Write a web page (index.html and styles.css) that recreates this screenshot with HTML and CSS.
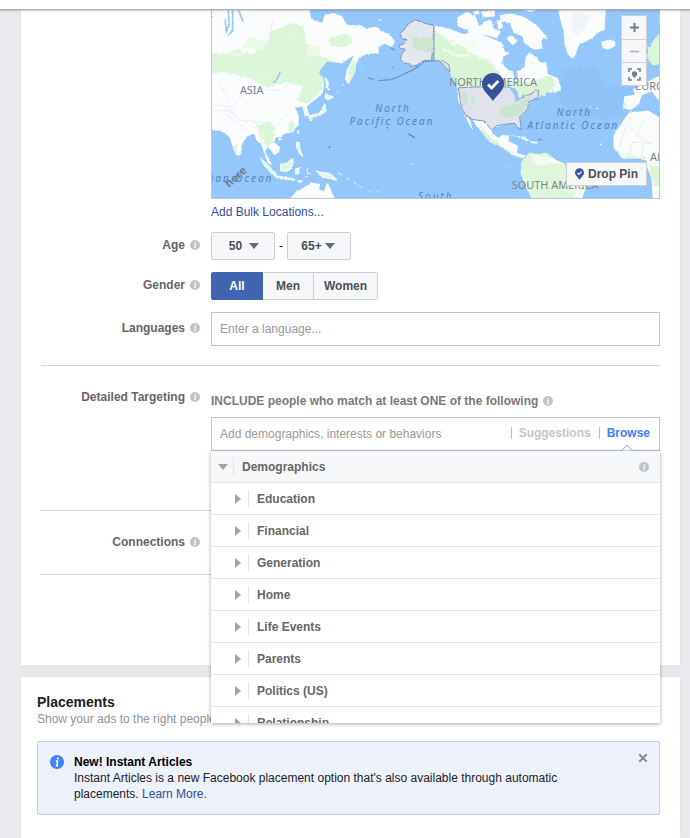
FILE: index.html
```html
<!DOCTYPE html>
<html lang="en">
<head>
<meta charset="utf-8">
<meta name="viewport" content="width=device-width, initial-scale=1">
<title>Audience</title>
<link rel="stylesheet" href="styles.css">
</head>
<body>
<svg width="0" height="0" class="defs" aria-hidden="true">
  <symbol id="info" viewBox="0 0 10 10"><circle cx="5" cy="5" r="5" fill="currentColor"/><circle cx="5.6" cy="2.5" r=".8" fill="#fff"/><path d="M4.2 4.3h1.2L4.8 7.6h1" fill="none" stroke="#fff" stroke-width="1.1"/></symbol>
  <symbol id="pin" viewBox="0 0 22 28"><path d="M11 0a11 11 0 0 1 11 11c0 6-6 10-11 17C6 21 0 17 0 11A11 11 0 0 1 11 0z" fill="#34539b"/><path d="M6 11.5l3.6 3.5 6.8-7" fill="none" stroke="#fff" stroke-width="2.8"/></symbol>
  <symbol id="down" viewBox="0 0 10 6"><path d="M0 0h10L5 6z" fill="currentColor"/></symbol>
  <symbol id="right" viewBox="0 0 6 10"><path d="M0 0l6 5-6 5z" fill="currentColor"/></symbol>
</svg>
<header class="topbar"></header>
<main>
  <section class="card audience">
    <div class="row">
      <div class="field">
        <div class="map">
          <svg class="world" viewBox="0 0 449 189" preserveAspectRatio="xMidYMid slice" role="img" aria-label="World map">
            <defs>
            <filter id="coast" x="-5%" y="-5%" width="110%" height="110%"><feTurbulence type="fractalNoise" baseFrequency=".16" numOctaves="3" seed="4"/><feDisplacementMap in="SourceGraphic" scale="7" xChannelSelector="R" yChannelSelector="G"/></filter>
            <filter id="woods" x="-5%" y="-5%" width="110%" height="110%"><feTurbulence type="fractalNoise" baseFrequency=".1" numOctaves="3" seed="9"/><feDisplacementMap in="SourceGraphic" scale="16" xChannelSelector="R" yChannelSelector="G"/><feGaussianBlur stdDeviation=".6"/></filter>
            <clipPath id="asia"><path d="M18 20H310L318 56 350 66 358 42 385 36 410 46 425 72 470 74 480 82 512 78 530 92 552 100 570 122 560 138 535 128 520 142 520 158 485 160 462 172 452 190 450 215 430 250 420 238 423 210 436 185 445 164 410 188 365 182 345 205 342 220 352 228 356 250 352 275 335 293 318 305 304 318 312 345 298 348 290 318 268 322 280 345 278 375 262 395 235 400 226 412 212 410 205 425 222 440 222 455 205 464 192 446 182 440 180 460 195 484 199 498 185 485 172 450 166 430 152 420 145 400 125 408 108 432 104 465 92 466 80 440 72 412 60 400 40 390 18 388Z"/></clipPath>
            <clipPath id="america"><path d="M12 73L60 84 100 100 130 92 180 110 216 125 225 150 240 158 220 168 218 190 236 208 250 212 255 240 265 232 262 212 285 198 288 170 300 155 322 170 330 184 350 185 355 220 385 232 395 262 385 276 350 275 325 292 300 300 297 320 270 350 273 385 263 388 255 365 200 380 185 370 187 398 205 412 218 404 240 406 236 422 265 436 262 458 290 466 280 475 250 465 205 435 180 425 160 400 135 370 125 352 115 348 130 388 122 380 100 335 85 300 80 255 60 215 38 184 12 175Z"/></clipPath>
            <clipPath id="samerica"><path d="M275 485L300 456 325 462 350 457 380 480 405 488 412 505 440 510 475 545 458 595H305L285 550 272 520Z"/></clipPath></defs>
            <rect width="449" height="189" fill="#94c8fc"/>
            <path d="M230 70l35 25 15 45-20 30h-40l12-60z" fill="#8cc1fa" opacity=".2"/>
            <path d="M352 60l30-5 18 25 30-5-12 30-40 5-30-20z" fill="#84bcf7" opacity=".35" filter="url(#woods)"/>
            <g transform="translate(-6 -9) scale(.33333)">
              <g filter="url(#coast)"><g clip-path="url(#asia)">
                <path d="M0 0h700v600H0z" fill="#fafcfd"/>
                <path filter="url(#woods)" d="M18 160l45-2 30-12 48 15 50-45 0-20 70-30 35 10 5 45 30 40 60 20-25 30-20 60-40 40-30-10 15-45-50-10-60 15-40-25-60-15-66-10z M370 110l50-10 25 15-20 25-50-5z M425 205l20-30 12 20-24 60z M150 375l40-15 20 25-5 35-20 25-25-45z M255 360l15 15-10 25-15-10z M80 440l12-10 5 30z" fill="#dcf6d8"/>
                <path filter="url(#woods)" d="M130 110l60 10-20 30-60-10zM310 130l40 10-20 30-30-10zM60 160l60-5-30 15z" fill="#eaf9e8"/>
                <path d="M20 220l60-15 70 30 50-15M20 310l50 10 30 40 70 5M80 320l50-60 80 10 55-20M40 250l40 70M60 340l65 50M215 370l30-30M200 60l-15 100M250 65l30 90 50 25M20 330h50l20 20M140 360l30 30-10 30" fill="none" stroke="#ececf7" stroke-width="3"/>
                <path d="M66 20l4 50-8 20-5-35M80 20v70l-15 15M98 28l14 35M224 215l-12 24-12 8" fill="none" stroke="#94c8fc" stroke-width="5"/>
              </g></g>
              <g fill="#e1f7de" stroke="#f8fcfb" stroke-width="3" filter="url(#coast)">
                <path d="M360 280l24 10-17 8-8-4zM358 310l4 22-18 12-30 8-4-5 32-9 10-16zM359 230l8 10 3 28-6-5zM310 350l10 8-3 4zM165 474l25 24 22 24-8 3-28-28zM205 526l60 10 3 5-55-8zM224 492l18-3 18-14 3 12-8 20-12 7-18-2zM270 506l14-4-8 8 6 10-12 2zM332 512l16 5 24 2 24 20-18-2-30-8zM273 424l8 4 2 18 8 22-8-7-10-20zM275 542h16l-10 6zM219 414l8 2-6 4zM277 390l3 6-3 4z"/>
                <path d="M250 600l22-24 22-12 22-15 26 4-3 15 18 8 8-28 9 18 6 18 12 18z" fill="#f8fcfb"/>
              </g>
              <path d="M398 518l12 6M424 535l8 4M445 545l8 8M460 555l8 8M492 575h4M517 575h4M617 492h5M305 502v16M305 520h10M300 530h6M410 252h5M395 275h4M520 57h10M468 205h3" stroke="#f4fbfb" stroke-width="3"/>
              <path filter="url(#coast)" d="M687 75l-27-8-28-10-22 12-14 20-12 9 7 16 15 3-10 12-14 5 4 8 16 4-12 13-4 18 12 10 20 4-4 8 20-6 20-12 26-2z" fill="#e3e7ee" stroke="#8796c1" stroke-width="3"/>
              <path filter="url(#woods)" d="M615 108l30 4 41-2v44l-40 0-20-14z" fill="#cde7cf"/>
              <g filter="url(#coast)"><path d="M690 180l-32 2-28 22-30 15-42 18-38 3M505 237l-16-6M557 142l12 6M562 198v3" fill="none" stroke="#7791ca" stroke-width="4"/></g>
              <path d="M610 400l8 6M620 405l8 8M546 380v4M372 438v5" stroke="#5877ae" stroke-width="4"/>
            </g>
            <g transform="translate(219 -9) scale(.33333)">
              <g filter="url(#coast)"><g clip-path="url(#america)">
                <path d="M0 0h500v600H0z" fill="#fafcfc"/>
                <path filter="url(#woods)" d="M10 90l55 25 65 45 50 20 30 40 20 20 80 5 55-25 20 45-30 15-80 25-100-30-120-8-30-60-25-32z" fill="#d9f5d6"/>
                <path filter="url(#woods)" d="M150 380l20 15 30 32 50 30-20 0-75-50z" fill="#d9f4d5"/>
                <path filter="url(#woods)" d="M20 85l50 45 55-10 20 50 50 10M40 145l40 20 60-4M300 180l30 20" fill="none" stroke="#f3faf3" stroke-width="7"/>
              </g></g>
              <path filter="url(#coast)" d="M85 262l55-3h95l24 10 8 28 20-12 16-3 16-15 8 3-2 22-28 12-2 20-25 24 5 40-12-5-8-15-55 8-14 14-22-28-38-5-20-15-12-25z" fill="#e0e3ec" stroke="#8796bd" stroke-width="3"/>
              <path filter="url(#woods)" d="M210 320l55-10 40-25-30 57-35 10-30-5zM95 275l20 5-5 35-13-5zM120 290l20-10-8 35z" fill="#cbe5cf"/>
              <path filter="url(#coast)" d="M240 262l18 5 9 28-6 8-7-24zM278 283l12 2" fill="#94c8fc" stroke="#94c8fc" stroke-width="4"/>
              <path d="M12 73v102M0 178l30 3 15 18 15 15-3-22-22-14" fill="#dbe2e9" stroke="#8796bd" stroke-width="3"/>
              <g fill="#fafcfc" filter="url(#coast)">
                <path d="M82 50l30-18 25 15 10 26-40 14-25-12zM128 32l18-4 4 10-14 4zM152 32l43-4 0 18-33 4zM110 75l40 0 20 12-4 16-50-6zM160 64l24-8 8 28 22 8-12 20-32-8-20-22zM212 42l33-4 40 10 40 28 25 30-14 13 3 24-23 4-30-18-8-23-26-10-10-28-30-8zM200 60l14-3 6 22-14 8zM228 110l18-6 18 16-15 14zM250 20h80l-25 14zM348 98l6 12-8 10z"/>
                <path d="M385 20l6 30 12 45 2 35 10 30 14 16 10-15 10-28 38-20 23-20 16-5 4-70z"/>
                <path d="M515 124l22-7 20 4 2 14-23 12-16-6z"/>
                <path d="M700 355l-43-25-30 4-27 2-25 35-22 35 0 36 28 33 53 0 17 5 4 24 13 30 3 70h29z"/>
                <path d="M700 222l-48 22-40 23 5 16-32 5-3 36 23 6 25-20 8-25 30-13 32 45zM605 202l20 12 8 34-22 2 4-20-10-13zM582 222l14 4-5 16-10 3z"/>
                <path d="M238 404l40 5 22 11-6 2-30-12zM304 423l20 2-2 5-20-2zM478 320h6M510 430h7v5h-7z"/>
              </g>
              <path filter="url(#woods)" d="M435 35l50 10-20 40-30 20-15-40z" fill="#f2f5f7"/>
              <path filter="url(#woods)" d="M697 85l-27 40-14 18 3 42 14 10 24-9zM570 455l20 13h55l10 5h-65zM658 490l39 10v60l-24-5zM585 296l8 2-3 23-7 3z" fill="#daf5d7"/>
              <g filter="url(#coast)"><g clip-path="url(#samerica)">
                <path d="M260 440h230v160H260z" fill="#dff6dc"/>
                <path filter="url(#woods)" d="M300 460l80 16 25 15-50-2-30 10-15-20zM430 515l50 40-10 50h-30l-10-45zM280 510l15 50-10 10z" fill="#f6fbf6"/>
              </g></g>
              <path d="M555 395l35-30 35 40 20-45M570 440l20-60M625 405l50 30M600 470l10-45 60 5M640 470v-35" fill="none" stroke="#e9e8f4" stroke-width="3"/>
              <path d="M108 345l4 4M325 418h12M265 380l2 8" stroke="#758fc4" stroke-width="4"/>
              <path d="M282 407l8 6M480 320h6M500 324h8M230 498v3" stroke="#e8f6fb" stroke-width="3"/>
              <path filter="url(#coast)" d="M367 265l14-12 12 16-18 4M337 285l12-6" fill="#f7fcfa" stroke="#eef9ee" stroke-width="4"/>
            </g>
            <g class="land-name"><text x="28" y="84">ASIA</text><text x="238" y="76">NORTH AMERICA</text><text x="301" y="180">SOUTH AMERICA</text><text x="425" y="80">EUROPE</text><text x="440" y="152">AFRICA</text></g>
            <g class="sea-name"><text x="164" y="103">North</text><text x="138" y="116">Pacific Ocean</text><text x="346" y="107">North</text><text x="317" y="120">Atlantic Ocean</text><text x="-22" y="173">Indian Ocean</text><text x="207" y="191">South</text></g>
            <text class="brand" transform="translate(17 179) rotate(-42)">here</text>
          </svg>
          <svg class="pin" width="22" height="28" aria-hidden="true"><use href="#pin"/></svg>
          <div class="zoom">
            <button type="button" aria-label="Zoom in"><svg width="9" height="9"><path d="M4.500 0v9M0 4.500h9" stroke="#777b86" stroke-width="2"/></svg></button>
            <button type="button" aria-label="Zoom out"><svg width="9" height="9"><path d="M0 4.500h9" stroke="#b0b3bb" stroke-width="1.500"/></svg></button>
            <button type="button" aria-label="Fit to locations"><svg width="13" height="13" viewBox="0 0 13 13"><path d="M1 4V1h3M9 1h3v3M12 9v3H9M4 12H1V9" fill="none" stroke="#777b86" stroke-width="1.600"/><path d="M6.500 3.200a2.700 2.700 0 0 1 2.700 2.700c0 1.500-1.500 2.400-2.700 4.100-1.200-1.700-2.700-2.600-2.700-4.100a2.700 2.700 0 0 1 2.700-2.700z" fill="#777b86"/></svg></button>
          </div>
          <button type="button" class="drop-pin"><svg width="9" height="12" aria-hidden="true"><use href="#pin"/></svg>Drop Pin</button>
        </div>
        <a href="#" class="bulk">Add Bulk Locations...</a>
      </div>
    </div>
    <div class="row centered">
      <div class="label"><label for="age-min">Age</label><svg class="info"><use href="#info"/></svg></div>
      <div class="field ages">
        <span class="pick"><select id="age-min"><option>50</option></select><svg width="10" height="6"><use href="#down"/></svg></span>
        <span>-</span>
        <span class="pick"><select aria-label="Maximum age"><option>65+</option></select><svg width="10" height="6"><use href="#down"/></svg></span>
      </div>
    </div>
    <div class="row centered">
      <div class="label"><span id="gender">Gender</span><svg class="info"><use href="#info"/></svg></div>
      <div class="field segments" role="radiogroup" aria-labelledby="gender">
        <label><input type="radio" name="gender" checked><span>All</span></label>
        <label><input type="radio" name="gender"><span>Men</span></label>
        <label><input type="radio" name="gender"><span>Women</span></label>
      </div>
    </div>
    <div class="row centered">
      <div class="label"><label for="languages">Languages</label><svg class="info"><use href="#info"/></svg></div>
      <div class="field box"><input id="languages" type="text" placeholder="Enter a language..."></div>
    </div>
    <div class="row divided targeting">
      <div class="label"><label for="targeting">Detailed Targeting</label><svg class="info"><use href="#info"/></svg></div>
      <div class="field">
        <div class="include">INCLUDE people who match at least ONE of the following<svg class="info"><use href="#info"/></svg></div>
        <div class="combo">
          <div class="box">
            <input id="targeting" type="text" placeholder="Add demographics, interests or behaviors">
            <button type="button" class="tab">Suggestions</button>
            <button type="button" class="tab active">Browse<svg class="notch" width="12" height="7"><path d="M0 6.500h1l5-5.500 5 5.500h1" fill="#fff" stroke="#8fb0ee"/></svg></button>
          </div>
          <div class="menu">
            <button type="button" class="item group"><svg width="10" height="6"><use href="#down"/></svg><span>Demographics</span><svg class="info"><use href="#info"/></svg></button>
            <button type="button" class="item"><svg width="6" height="10"><use href="#right"/></svg><span>Education</span></button>
            <button type="button" class="item"><svg width="6" height="10"><use href="#right"/></svg><span>Financial</span></button>
            <button type="button" class="item"><svg width="6" height="10"><use href="#right"/></svg><span>Generation</span></button>
            <button type="button" class="item"><svg width="6" height="10"><use href="#right"/></svg><span>Home</span></button>
            <button type="button" class="item"><svg width="6" height="10"><use href="#right"/></svg><span>Life Events</span></button>
            <button type="button" class="item"><svg width="6" height="10"><use href="#right"/></svg><span>Parents</span></button>
            <button type="button" class="item"><svg width="6" height="10"><use href="#right"/></svg><span>Politics (US)</span></button>
            <button type="button" class="item"><svg width="6" height="10"><use href="#right"/></svg><span>Relationship</span></button>
          </div>
        </div>
      </div>
    </div>
    <div class="row divided connections">
      <div class="label"><span>Connections</span><svg class="info"><use href="#info"/></svg></div>
    </div>
  </section>
  <section class="card placements">
    <h2>Placements</h2>
    <p class="sub">Show your ads to the right people</p>
    <div class="notice">
      <svg class="badge" width="14" height="14"><use href="#info"/></svg>
      <div class="message"><h3>New! Instant Articles</h3><p>Instant Articles is a new Facebook placement option that's also available through automatic placements. <a href="#">Learn More.</a></p></div>
      <button type="button" class="close" aria-label="Close"><svg width="8" height="8"><path d="M0 0l8 8M8 0L0 8" stroke="#858b9a" stroke-width="2"/></svg></button>
    </div>
  </section>
</main>
</body>
</html>
```
FILE: styles.css
```css
* { box-sizing: border-box; }
body {
  margin: 0;
  min-height: 100vh;
  display: flex;
  flex-direction: column;
  background: #e9eaee;
  color: #1d2129;
  font: 12px/16px "Liberation Sans", Helvetica, sans-serif;
}
button, input, select { font: inherit; color: inherit; margin: 0; }
button { display: flex; align-items: center; padding: 0; border: 0; background: none; cursor: pointer; }
a { color: #2f4f9f; text-decoration: none; }
svg { display: block; flex: none; }
h2, h3, p { margin: 0; }
.defs { position: absolute; }

.topbar {
  position: sticky;
  top: 0;
  z-index: 5;
  height: 10px;
  background: #fff;
  border-bottom: 1px solid #acacae;
  box-shadow: 0 1px 2px rgba(0, 0, 0, .2);
}
main {
  flex: 1;
  display: flex;
  flex-direction: column;
  gap: 12px;
  padding: 0 10px 0 21px;
}
.card { background: #fff; box-shadow: 0 0 3px rgba(0, 0, 0, .05); }
.audience {
  display: flex;
  flex-direction: column;
  gap: 12px;
  padding: 0 20px 90px;
}

.row { display: grid; grid-template-columns: 159px 1fr; column-gap: 11px; }
.row .field { grid-column: 2; min-width: 0; }
.centered { align-items: center; }
.label {
  display: flex;
  align-items: center;
  justify-content: flex-end;
  gap: 5px;
  height: 16px;
  color: #666;
  font-weight: bold;
}
.centered .label { height: 18px; padding-bottom: 2px; }
.info { width: 10px; height: 10px; color: #bec2cb; }

.map {
  position: relative;
  height: 189px;
  overflow: hidden;
  border: solid #b9c5d8;
  border-width: 0 1px 1px;
}
.world { width: 100%; height: 100%; }
.land-name { font: 11px "Noto Sans", sans-serif; fill: #7d8490; }
.sea-name { font: italic 10px "Noto Sans", sans-serif; letter-spacing: 2px; fill: #5183bd; }
.brand { font: bold 11px "Noto Sans", sans-serif; fill: #6d8193; }
.pin { position: absolute; left: 270px; top: 63px; }
.zoom { position: absolute; right: 12px; top: 5px; border: 1px solid #ccced5; background: #f6f7f9; }
.zoom button { width: 24px; height: 23px; justify-content: center; }
.zoom button + button { border-top: 1px solid #d3d5da; }
.drop-pin {
  position: absolute;
  right: 12px;
  bottom: 12px;
  gap: 4px;
  height: 24px;
  padding: 0 8px;
  border: 1px solid #ccced5;
  background: #f6f7f9;
  color: #4b4f56;
  font-weight: bold;
}
.bulk { display: block; width: max-content; margin-top: 5px; }

.ages { display: flex; align-items: center; gap: 4px; }
.pick { display: grid; align-items: center; color: #4b4f56; }
.pick > * { grid-area: 1 / 1; }
.pick svg { justify-self: end; margin-right: 16px; color: #646a76; pointer-events: none; }
.pick select {
  appearance: none;
  width: 64px;
  height: 28px;
  padding: 0 15px 0 0;
  border: 1px solid #ccced5;
  border-radius: 2px;
  background: #f6f7f9;
  font-weight: bold;
  text-align: center;
  text-align-last: center;
}
.segments { display: flex; color: #4b4f56; font-weight: bold; }
.segments label { position: relative; }
.segments input { position: absolute; opacity: 0; }
.segments span {
  display: block;
  min-width: 51px;
  padding: 5px 10px;
  border: 1px solid #ccced5;
  border-left-width: 0;
  background: #f6f7f9;
  text-align: center;
}
.segments input:checked + span { border-color: #4064b2; background: #4064b2; color: #fff; }
.segments label:first-child span { min-width: 52px; border-left-width: 1px; border-radius: 2px 0 0 2px; }
.segments label:last-child span { border-radius: 0 2px 2px 0; }

.box { display: flex; align-items: center; height: 34px; border: 1px solid #bdc4d8; background: #fff; }
.box input { flex: 1; min-width: 0; height: 100%; padding: 0 8px; border: 0; outline: 0; background: none; }
.box input::placeholder { color: #999; opacity: 1; }

.divided { border-top: 1px solid #d3d5d9; padding-top: 23px; }
.targeting { margin-top: 7px; padding-bottom: 47px; }
.connections { padding-bottom: 24px; border-bottom: 1px solid #d3d5d9; }
.include { display: flex; align-items: center; gap: 5px; padding: 4px 0 8px; color: #7a7a7a; font-weight: bold; }
.combo { position: relative; }
.tab { position: relative; height: 32px; padding: 0 8px 2px 7px; color: #c5c5c5; font-weight: bold; }
.tab::before { content: ""; height: 12px; margin-right: 7px; border-left: 1px solid #b6bed2; }
.tab + .tab { padding: 0 9px 2px 0; }
.tab.active { color: #4080ff; }
.notch { position: absolute; right: 26px; bottom: -1px; }
.menu {
  position: absolute;
  z-index: 2;
  top: 100%;
  left: 0;
  right: 0;
  height: 272px;
  overflow: hidden;
  background: #fff;
  box-shadow: 0 1px 4px rgba(0, 0, 0, .35);
}
.item {
  width: 100%;
  height: 32px;
  padding: 0 11px 0 24px;
  border-bottom: 1px solid #e5e6e9;
  color: #666;
  font-weight: bold;
  text-align: left;
}
.item > svg:first-child { color: #a3a3a3; }
.item span { flex: 1; margin-left: 7px; padding: 1px 8px; border-left: 1px solid #e5e6e9; }
.group { padding-left: 7px; background: #f6f7f9; }
.group span { margin-left: 5px; }

.placements { flex: 1; padding: 17px 20px 16px 16px; }
.placements h2 { font-size: 14px; line-height: 16px; }
.sub { margin-top: 1px; color: #90949c; }
.notice {
  display: flex;
  align-items: flex-start;
  margin-top: 14px;
  padding: 12px;
  border: 1px solid #c2d0ea;
  border-radius: 2px;
  background: #ecf1fa;
}
.badge { margin: 1px 10px 0 0; color: #4080ff; }
.message { flex: 1; margin-right: 36px; }
.message h3 { font-size: 12px; line-height: 16px; color: #000; }
.close { height: 8px; }
```
